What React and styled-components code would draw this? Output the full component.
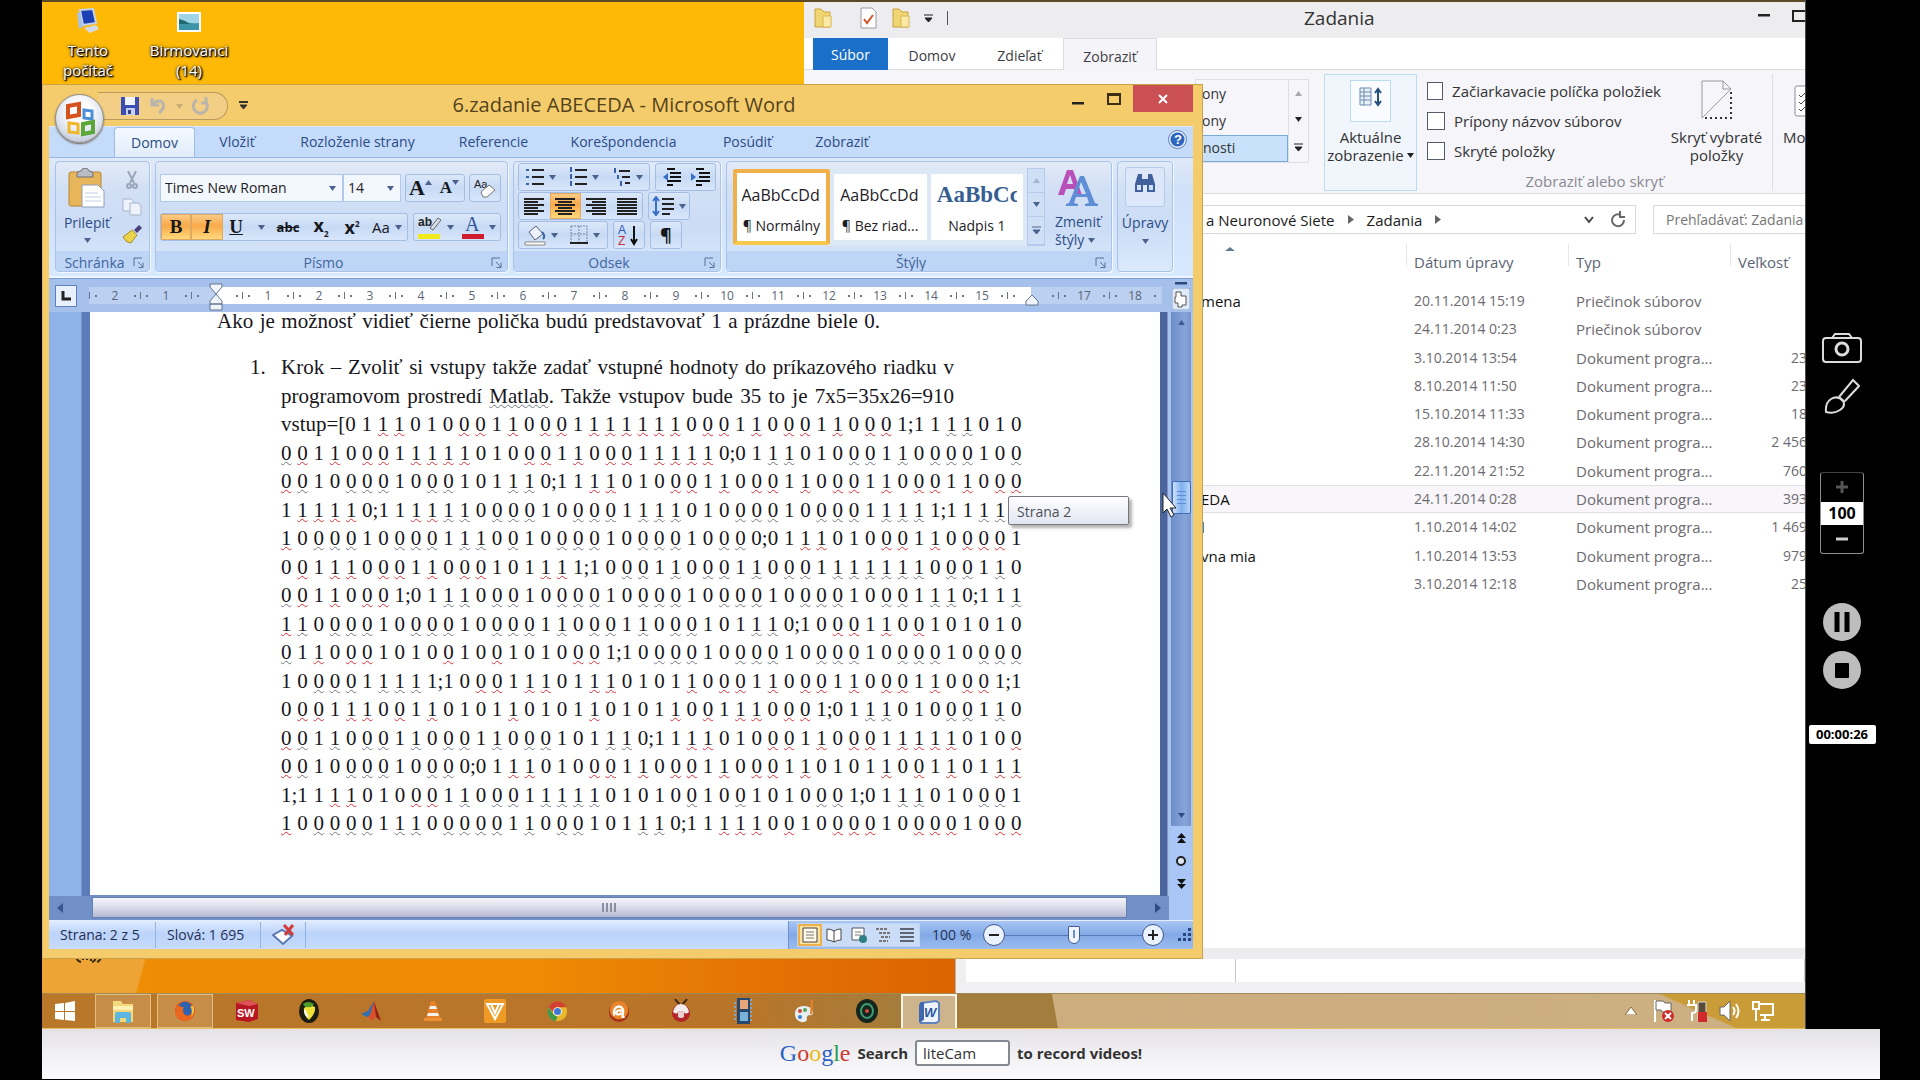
import React from "react";
import styled, { createGlobalStyle, css } from "styled-components";

const ui = `"Open Sans", "Noto Sans", "Liberation Sans", sans-serif`;
const serif = `"Liberation Serif", "Times New Roman", serif`;

const GlobalStyle = createGlobalStyle`
  *, *::before, *::after { box-sizing: border-box; }
  body { margin: 0; background: #000; }
  button, input, select { font: inherit; color: inherit; margin: 0; padding: 0; border: 0; background: none; border-radius: 0; outline: 0; }
  p, h1, ol { margin: 0; padding: 0; font-weight: 400; }
  svg { display: block; flex: none; }
`;

/* ---------- page frame ---------- */
const Page = styled.div`
  min-height: 100vh;
  padding: 0 40px 1px 42px;
  display: flex;
  flex-direction: column;
  background: #000;
  font: 14px/18px ${ui};
  color: #1b1b1b;
`;
const Stage = styled.div`
  flex: 1;
  display: flex;
`;
const Screen = styled.div`
  flex: 1;
  min-width: 0;
  display: flex;
  flex-direction: column;
`;
const Desktop = styled.main`
  flex: 1;
  position: relative;
  overflow: hidden;
  border-top: 2px solid #5b4a25;
  background:
    linear-gradient(105deg, #eda434 0 106px, transparent 107px) 0 100% / 100% 60px no-repeat,
    linear-gradient(to right, #ef8d05 0, #ee8a04 500px, #e57405 700px, #dd6400 900px) 0 100% / 100% 60px no-repeat,
    #fdb906;
`;

/* ---------- desktop shortcuts ---------- */
const Shortcuts = styled.div`
  display: flex;
  padding-top: 5px;
`;
const Shortcut = styled.button`
  width: 110px;
  display: flex;
  flex-direction: column;
  align-items: center;
  gap: 5px;
  color: #fff;
  font-size: 15px;
  line-height: 20px;
  text-shadow: 1px 1px 2px #000, 0 0 3px #000, 1px 1px 1px #000;
  &:first-child { width: 92px; }
`;
const HiddenCaption = styled.svg`
  position: absolute;
  left: 33px;
  bottom: 28px;
`;

/* ---------- shared window parts ---------- */
const Window = styled.section`
  position: absolute;
  display: flex;
  flex-direction: column;
`;
const Row = styled.div`
  display: flex;
  align-items: ${(p) => p.$align || "center"};
  gap: ${(p) => p.$gap || 0}px;
`;
const IconButton = styled.button`
  width: ${(p) => p.$w || 24}px;
  height: ${(p) => p.$h || 24}px;
  display: flex;
  align-items: center;
  justify-content: center;
  gap: 3px;
`;

/* ---------- explorer ---------- */
const BackWindow = styled(Window)`
  left: 913px;
  right: 0;
  bottom: 0;
  height: 44px;
  background: #f0eff1;
  padding: 10px 0 11px 10px;
  border-left: 1px solid #b9b4ae;
  flex-direction: row;
`;
const BackPane = styled.div`
  background: #fff;
  border-right: 1px solid #c9c9c9;
  width: ${(p) => p.$w};
`;
const Explorer = styled(Window)`
  left: 762px;
  right: 0;
  top: 0;
  bottom: 34px;
  background: #fff;
  border-bottom: 11px solid #ecebed;
  overflow: hidden;
  font-size: 15px;
`;
const ExTitle = styled.header`
  height: 36px;
  padding-bottom: 4px;
  background: #ededef;
  display: grid;
  grid-template-columns: 200px 1fr 130px;
  align-items: center;
`;
const ExHeading = styled.h1`
  font-size: 19px;
  line-height: 26px;
  color: #333;
  padding-left: 300px;
`;
const ExQuick = styled(Row)`
  padding-left: 10px;
`;
const ExControls = styled(Row)`
  justify-content: flex-end;
  padding-bottom: 5px;
  gap: 22px;
`;
const ExTabs = styled.nav`
  height: 32px;
  padding-left: 9px;
  display: flex;
  border-bottom: 1px solid #dcdcde;
  font-size: 14px;
`;
const ExTab = styled.button`
  width: ${(p) => p.$w}px;
  height: 32px;
  padding-top: 4px;
  color: #3c3c44;
  ${(p) => p.$file && css`background: #1a6fc8; color: #fff; padding-top: 2px;`}
  ${(p) => p.$active && css`background: #f5f5f9; border: 1px solid #dcdcde; border-bottom: 0;`}
`;
const ExRibbon = styled.div`
  height: 124px;
  padding: 4px 0 2px 391px;
  background: #f5f5fa;
  border-bottom: 1px solid #dcdce0;
  display: flex;
  align-items: flex-start;
  color: #333;
  & > * { flex-shrink: 0; }
`;
const LayoutList = styled.div`
  width: 114px;
  height: 84px;
  margin-top: 5px;
  display: flex;
  border: 1px solid #dfe0e6;
  font-size: 14px;
`;
const LayoutNames = styled.div`
  flex: 1;
  display: grid;
  grid-template-rows: 1fr 1fr 1fr;
`;
const LayoutName = styled.button`
  text-align: left;
  padding-left: 6px;
  ${(p) => p.$on && css`background: #c9e1fa; border: 1px solid #7aa9d8;`}
`;
const LayoutArrows = styled.div`
  width: 20px;
  border-left: 1px solid #dfe0e6;
  display: grid;
  align-items: center;
  justify-items: center;
`;
const CurrentView = styled.button`
  width: 93px;
  height: 117px;
  margin-left: 15px;
  padding-top: 5px;
  border: 1px solid #b9ddf0;
  background: #f0f6fc;
  display: flex;
  flex-direction: column;
  align-items: center;
`;
const ViewIcon = styled.span`
  width: 41px;
  height: 42px;
  margin-bottom: 6px;
  border: 1px solid #b9ddf0;
  background: #f9fbfe;
  display: flex;
  justify-content: center;
  padding-top: 6px;
`;
const ShowHide = styled.div`
  width: 356px;
  height: 117px;
  padding-left: 10px;
  border-right: 1px solid #dfe0e6;
  display: grid;
  grid-template-columns: 234px 1fr;
  grid-template-rows: 98px 18px;
`;
const Checks = styled.div`
  padding-top: 2px;
  display: flex;
  flex-direction: column;
`;
const Check = styled.label`
  height: 30px;
  display: flex;
  align-items: center;
  gap: 9px;
  white-space: nowrap;
`;
const Box = styled.input`
  appearance: none;
  width: 18px;
  height: 18px;
  border: 1px solid #555b68;
  background: #fff;
`;
const TallButton = styled.button`
  padding: 6px 0 0;
  display: flex;
  flex-direction: column;
  align-items: center;
  gap: 8px;
`;
const SectionName = styled.div`
  grid-column: 1 / -1;
  text-align: center;
  padding-right: 10px;
  color: #8a8a92;
`;
const Options = styled(TallButton)`
  align-items: flex-start;
  padding: 11px 0 0 10px;
  gap: 11px;
  svg { margin-left: 11px; }
`;
const AddressRow = styled.div`
  padding: 11px 0 0;
  display: flex;
  gap: 17px;
`;
const Address = styled.div`
  width: 832px;
  height: 29px;
  padding-left: 401px;
  border: 1px solid #d9d9d9;
  display: flex;
  align-items: center;
  white-space: nowrap;
  gap: 13px;
`;
const AddressEnd = styled(Row)`
  margin-left: auto;
`;
const Search = styled.input`
  flex: 1;
  min-width: 0;
  height: 29px;
  border: 1px solid #d9d9d9;
  border-right: 0;
  padding-left: 12px;
  font-size: 14px;
  &::placeholder { color: #777; opacity: 1; }
`;
const Files = styled.table`
  width: 1003px;
  height: 354px;
  margin-top: 10px;
  border-collapse: collapse;
  table-layout: fixed;
  color: #6d6a70;
  white-space: nowrap;
  col:nth-child(1) { width: 602px; }
  col:nth-child(2), col:nth-child(3) { width: 162px; }
  th { height: 43px; font-weight: 400; text-align: left; padding: 0 0 8px 8px; color: #5b6475; background: linear-gradient(#e6e6ea, #e6e6ea) 0 0 / 1px 22px no-repeat; }
  th:first-child { background: none; padding: 0 0 34px 421px; }
  td { padding: 0 0 0 8px; }
  td:first-child { padding-left: 397px; color: #111; }
  td:nth-child(2), td:last-child { font-size: 14px; }
  td:last-child { text-align: right; }
`;
const FileRow = styled.tr`
  ${(p) => p.$on && css`background: #f8f6fa; outline: 1px solid #e2dfe4; outline-offset: -1px;`}
`;

/* ---------- word window ---------- */
const Word = styled(Window)`
  left: 0;
  top: 82px;
  bottom: 34px;
  width: 1161px;
  background: #f4cc6c;
  border: 1px solid #c9a24c;
  border-left-color: #e0b558;
  padding: 0 9px 9px 6px;
`;
const WordTitle = styled.header`
  height: 41px;
  display: grid;
  grid-template-columns: 260px 1fr 140px;
`;
const WordHeading = styled.h1`
  font-size: 20px;
  line-height: 40px;
  color: #54431c;
  text-align: center;
  padding-right: 114px;
  white-space: nowrap;
`;
const Office = styled.button`
  position: absolute;
  left: 12px;
  top: 9px;
  width: 49px;
  height: 49px;
  border-radius: 50%;
  border: 1px solid #8f8a80;
  background: radial-gradient(circle at 50% 35%, #fff 0 25%, #dde3ee 60%, #aab4c8 100%);
  box-shadow: 0 1px 2px #6b6250;
  display: flex;
  align-items: center;
  justify-content: center;
  z-index: 2;
`;
const QuickBar = styled(Row)`
  height: 28px;
  width: 130px;
  margin: 7px 0 0 49px;
  padding-left: 22px;
  border: 1px solid #b99a5c;
  border-left: 0;
  border-radius: 0 14px 14px 0;
  background: #f2cf84;
`;
const QuickRow = styled(Row)`
  gap: 6px;
`;
const Controls = styled.div`
  display: flex;
  justify-content: flex-end;
  align-items: flex-start;
`;
const Close = styled.button`
  width: 60px;
  height: 27px;
  background: #cb5053;
  color: #fff;
  display: flex;
  align-items: center;
  justify-content: center;
`;
const Tabs = styled.nav`
  height: 31px;
  padding-left: 65px;
  display: flex;
  align-items: flex-end;
  background: #c5dbfa;
  border-top: 1px solid #dbe8fb;
  color: #2b4c86;
`;
const Tab = styled.button`
  width: ${(p) => p.$w}px;
  height: 30px;
  ${(p) => p.$on && css`
    border: 1px solid #9dbce6;
    border-bottom: 0;
    border-radius: 4px 4px 0 0;
    background: linear-gradient(#f4f9ff, #e2ecfa);
  `}
`;
const Help = styled.button`
  margin: 0 6px 8px auto;
`;
const Ribbon = styled.div`
  height: 121px;
  padding: 3px 20px 4px 6px;
  display: flex;
  gap: 5px;
  background: linear-gradient(#dfe9f8, #cfe0f8 30%, #d7e9ff);
  border-top: 1px solid #98b8e4;
  border-bottom: 2px solid #eef5ff;
`;
const Group = styled.section`
  width: ${(p) => p.$w}px;
  border: 1px solid #a9c3e8;
  border-radius: 4px;
  box-shadow: 1px 1px 0 #f2f8ff;
  display: flex;
  flex-direction: column;
  flex-shrink: 0;
  background: linear-gradient(#e2eaf7, #d2e0f5 25%, #cbdcf5 60%, #dbe9fb);
  overflow: hidden;
`;
const GroupBody = styled.div`
  flex: 1;
  min-height: 0;
  display: flex;
  ${(p) => p.$column && css`flex-direction: column;`}
  gap: ${(p) => p.$gap || 0}px;
  padding: ${(p) => p.$pad || "0"};
`;
const GroupName = styled.footer`
  height: 20px;
  display: flex;
  align-items: center;
  justify-content: center;
  background: #bfd5f5;
  color: #3f659f;
  padding: 3px 4px 0 0;
  line-height: 17px;
  & > span { flex: 1; text-align: center; }
`;
const Paste = styled.button`
  width: 66px;
  padding: 6px 2px 0 0;
  display: flex;
  flex-direction: column;
  align-items: center;
  gap: 6px;
  color: #2b4c86;
`;
const SmallTools = styled.div`
  display: grid;
  padding: 4px 5px 4px 0;
  grid-template-rows: 1fr 1fr 1fr;
`;
const Field = styled.label`
  width: ${(p) => p.$w}px;
  height: 28px;
  background: #f3f7fe;
  border: 1px solid #b2c9eb;
  display: flex;
  align-items: center;
  padding: 0 6px 0 4px;
  color: #222;
  select { appearance: none; flex: 1; min-width: 0; }
`;
const Strip = styled.div`
  height: 28px;
  width: ${(p) => p.$w}px;
  display: flex;
  border: 1px solid #a3bde4;
  border-radius: 3px;
  background: linear-gradient(#dce8f9, #c7daf5 50%, #d8e6fa);
`;
const Tool = styled.button`
  flex: ${(p) => p.$flex || 1};
  display: flex;
  align-items: center;
  justify-content: center;
  gap: ${(p) => (p.$raised ? 0 : 5)}px;
  color: #16181d;
  font-family: ${(p) => (p.$serif ? serif : ui)};
  font-size: ${(p) => p.$size || 14}px;
  font-weight: ${(p) => (p.$bold ? 700 : 400)};
  sub, sup { font-size: 8px; line-height: 1; }
  ${(p) => p.$raised && css`svg { margin-bottom: 12px; }`}
  ${(p) => p.$on && css`
    background: linear-gradient(#fbcf8c, #f9a94a 45%, #fddc80);
    box-shadow: inset 0 0 0 1px #e0a860;
  `}
`;
const Gallery = styled.div`
  width: 312px;
  height: 78px;
  margin-top: 6px;
  display: flex;
  align-items: center;
  gap: 4px;
  background: #dde8f7;
`;
const StyleCard = styled.button`
  width: ${(p) => (p.$on ? 98 : 94)}px;
  height: ${(p) => (p.$on ? 76 : 66)}px;
  padding-top: 4px;
  background: #fff;
  overflow: hidden;
  white-space: nowrap;
  display: flex;
  flex-direction: column;
  align-items: center;
  justify-content: center;
  gap: 10px;
  color: #1d1b26;
  ${(p) => p.$on && css`border: 4px solid #f0b04a; border-bottom-color: #f8c94a; border-radius: 3px;`}
`;
const Sample = styled.span`
  width: 80px;
  overflow: hidden;
  text-align: left;
  font-size: 16px;
  line-height: 24px;
  ${(p) => p.$heading && css`font: 700 23px/24px ${serif}; color: #365f91;`}
`;
const GalleryArrows = styled.div`
  width: 18px;
  height: 78px;
  display: grid;
  border: 1px solid #b6cbec;
  background: #cfdff6;
  button { display: flex; align-items: center; justify-content: center; border-bottom: 1px solid #b6cbec; }
`;
const BigTool = styled.button`
  flex: 1;
  display: flex;
  flex-direction: column;
  align-items: center;
  justify-content: flex-start;
  gap: ${(p) => p.$gap || 4}px;
  padding-top: 5px;
  color: #2b4c86;
`;
const Tile = styled.span`
  width: 40px;
  height: 40px;
  border: 1px solid #b4caea;
  border-radius: 3px;
  background: #dce8f9;
  display: flex;
  align-items: flex-start;
  justify-content: center;
  padding-top: 5px;
`;
const RulerBar = styled.div`
  height: 34px;
  display: flex;
  align-items: center;
  background: #a5c0ea;
  border-top: 1px solid #7d9fd4;
  padding-left: 6px;
`;
const TabStop = styled.button`
  width: 22px;
  height: 22px;
  margin-right: 12px;
  border: 1px solid #5f80b8;
  background: #e8f0fb;
  display: flex;
  align-items: center;
  justify-content: center;
`;
const Ruler = styled.div`
  position: relative;
  width: 1073px;
  height: 17px;
  display: flex;
  background: linear-gradient(to right, #bcd1f2 127px, #fff 127px 942px, #bcd1f2 942px);
  font-size: 12px;
  line-height: 17px;
  color: #5a6576;
`;
const Mark = styled.span`
  width: 51px;
  display: grid;
  grid-template-columns: 11px 1fr 11px;
  align-items: center;
  justify-items: center;
  text-align: center;
  border-left: 1px solid transparent;
  border-image: linear-gradient(transparent 30%, #68758a 30% 70%, transparent 70%) 1;
  &::before, &::after { content: ""; width: 2px; height: 2px; background: #68758a; }
`;
const Marker = styled.svg`
  position: absolute;
  top: ${(p) => p.$top}px;
  left: ${(p) => p.$left}px;
`;
const RulerEnd = styled.div`
  margin-left: 10px;
  display: grid;
  gap: 3px;
`;
const Viewport = styled.div`
  flex: 1;
  min-height: 0;
  display: flex;
  position: relative;
`;
const Gutter = styled.div`
  width: 41px;
  background: linear-gradient(to right, #8fb3e8 0 32px, #5b7cb8 33px);
`;
const Paper = styled.article`
  flex: 1;
  min-width: 0;
  overflow: hidden;
  padding-left: 127px;
  background: #fff;
  border-bottom: 1px solid #6f8fc4;
  font: 21px/28px ${serif};
  color: #17161c;
`;
const Lead = styled.p`
  width: 663px;
  line-height: 18px;
  text-align-last: justify;
`;
const Step = styled.div`
  margin-top: 23px;
  padding-left: 33px;
  display: grid;
  grid-template-columns: 31px 740px;
`;
const StepText = styled.div`
  min-height: 484px;
  display: grid;
  align-content: space-between;
  white-space: nowrap;
`;
const Prose = styled.p`
  width: 673px;
  text-align-last: justify;
`;
const Bits = styled.p`
  text-align-last: justify;
`;
const Wave = styled.span`
  text-decoration: underline wavy ${(p) => (p.$red ? "#dc3038" : "#74757c")} 1px;
  text-decoration-skip-ink: none;
  text-underline-offset: 1px;
`;
const PaperEdge = styled.div`
  width: 11px;
  background: linear-gradient(to right, #4b669c 0 7px, #a9c4ee 8px);
`;
const ScrollColumn = styled.div`
  width: 22px;
  padding: 0 2px 0 0;
  display: flex;
  flex-direction: column;
  background: #a9c6f6;
`;
const Track = styled.div`
  flex: 1;
  padding: 8px 0;
  display: flex;
  flex-direction: column;
  align-items: center;
  background: linear-gradient(to right, #6d8ec8, #86a5d8 70%, #7795cb);
`;
const Thumb = styled.div`
  width: 19px;
  height: 33px;
  margin: 156px 0 auto;
  border: 1px solid #3e6bb8;
  border-radius: 2px;
  background: repeating-linear-gradient(#5f8cd0 0 1px, transparent 1px 4px) 50% 50% / 9px 13px no-repeat, linear-gradient(to right, #cfe2fc, #7fb0ee 50%, #b8d5fa);
`;
const Browse = styled.div`
  height: 70px;
  display: grid;
  justify-items: center;
  align-items: center;
`;
const PageTip = styled.div`
  position: absolute;
  left: 959px;
  top: 184px;
  width: 121px;
  height: 29px;
  padding-left: 8px;
  border: 1px solid #77787e;
  border-radius: 2px;
  background: linear-gradient(#fff, #e2e5f2);
  box-shadow: 3px 3px 3px rgba(0, 0, 0, 0.3);
  line-height: 30px;
  color: #4b5058;
`;
const Cursor = styled.svg`
  position: absolute;
  left: 1113px;
  top: 180px;
`;
const ScrollRow = styled.div`
  height: 24px;
  display: flex;
  padding: 1px 24px 2px 0;
  background: linear-gradient(to right, #7190c8 calc(100% - 24px), #a9c6f6 0);
`;
const ScrollEnd = styled.button`
  width: ${(p) => p.$w}px;
  padding: 0 8px;
  display: flex;
  align-items: center;
  justify-content: ${(p) => (p.$right ? "flex-end" : "flex-start")};
`;
const HThumb = styled.div`
  flex: 1;
  border: 1px solid #6a80ac;
  background: repeating-linear-gradient(to right, #8a8ea0 0 2px, transparent 2px 4px) 50% 50% / 16px 9px no-repeat, linear-gradient(#f6f6fb, #d9dbea 50%, #b5b9d2);
`;
const Status = styled.footer`
  height: 29px;
  display: flex;
  align-items: center;
  border-top: 1px solid #e5eefc;
  background: linear-gradient(#dfebfe, #bcd3fa 45%, #c6dbfc);
  color: #1f2f55;
`;
const StatusCell = styled.div`
  width: ${(p) => p.$w}px;
  height: 26px;
  padding-left: 11px;
  display: flex;
  align-items: center;
  white-space: nowrap;
  border-right: 1px solid #95b3e2;
`;
const StatusTools = styled.div`
  margin-left: auto;
  width: 405px;
  height: 28px;
  padding-left: 8px;
  display: flex;
  align-items: center;
  white-space: nowrap;
  border-left: 1px solid #6d91cc;
  background: linear-gradient(#a9c6f4, #82a9e6 50%, #9dbdf0);
`;
const Views = styled(Row)`
  width: 123px;
  height: 24px;
  flex: none;
  margin-right: 12px;
  border: 1px solid #c0d5f5;
  background: #cbdcf6;
`;
const ViewButton = styled.button`
  flex: 1;
  height: 22px;
  display: flex;
  align-items: center;
  justify-content: center;
  ${(p) => p.$on && css`background: #fbe2a2; box-shadow: inset 0 0 0 2px #eeb04a;`}
`;
const RoundButton = styled.button`
  width: 22px;
  height: 22px;
  border-radius: 50%;
  border: 1px solid #41568a;
  background: #eaf2ff;
  display: flex;
  align-items: center;
  justify-content: center;
`;
const Zoom = styled.input`
  appearance: none;
  width: 137px;
  height: 20px;
  background: linear-gradient(#5a7ab5, #5a7ab5) 0 50% / 100% 1px no-repeat;
  &::-webkit-slider-thumb {
    appearance: none;
    width: 12px;
    height: 18px;
    background: linear-gradient(#6c90cc, #6c90cc) 50% 40% / 2px 8px no-repeat, #f0f5ff;
    border: 1px solid #44598c;
    border-radius: 1px 1px 6px 6px;
  }
`;

/* ---------- taskbar ---------- */
const Taskbar = styled.nav`
  height: 36px;
  display: flex;
  border-top: 1px solid #a08a55;
  border-bottom: 1px solid #e8c060;
  background:
    linear-gradient(24deg, transparent 36px, #c99c37 38px) 100% 0 / 160px 34px no-repeat,
    linear-gradient(80deg, #b9772a 0, #b8752a 700px, #a37d3d 860px, #a37d3d 1000px, transparent 1001px),
    linear-gradient(to right, #c8a977, #cdb083);
`;
const Start = styled(IconButton)`
  width: 46px;
  height: 34px;
  margin-right: 7px;
`;
const Task = styled.button`
  width: 56px;
  height: 34px;
  margin-right: 6px;
  display: flex;
  align-items: center;
  justify-content: center;
  ${(p) => p.$open && css`background: rgba(255, 235, 200, 0.2); border: 1px solid #e0bd80;`}
  ${(p) => p.$front && css`background: rgba(250, 236, 222, 0.5); border: 2px solid #fdf4e4; border-bottom: 0;`}
`;
const Tray = styled(Row)`
  margin-left: auto;
  padding-right: 30px;
  gap: 9px;
`;

/* ---------- recorder rail ---------- */
const Rail = styled.aside`
  width: 75px;
  padding: 332px 2px 0 0;
  display: flex;
  flex-direction: column;
  align-items: center;
  border-left: 1px solid #4a4a4a;
`;
const RailTools = styled.div`
  height: 82px;
  margin-bottom: 58px;
  display: flex;
  flex-direction: column;
  justify-content: space-between;
`;
const Stepper = styled.div`
  width: 44px;
  height: 82px;
  margin-bottom: 49px;
  border: 1px solid #8e8e8e;
  border-top-color: #444;
  border-radius: 3px;
  display: grid;
  grid-template-rows: 1fr 23px 1fr;
  button { display: flex; align-items: center; justify-content: center; }
`;
const Level = styled.output`
  background: #fff;
  color: #000;
  text-align: center;
  font: 700 16px/22px ${ui};
`;
const Disc = styled.button`
  width: 38px;
  height: 38px;
  margin-bottom: ${(p) => p.$after}px;
  border-radius: 50%;
  background: #bdbdbd;
  display: flex;
  align-items: center;
  justify-content: center;
`;
const Timer = styled.time`
  width: 67px;
  height: 19px;
  border-radius: 2px;
  background: #fff;
  color: #000;
  font: 700 13px/19px ${ui};
  text-align: center;
`;

/* ---------- promo footer ---------- */
const Promo = styled.form`
  height: 50px;
  padding-bottom: 2px;
  display: flex;
  align-items: center;
  justify-content: center;
  gap: 7px;
  background: linear-gradient(#e4e2e6, #f1f0f3 50%, #fbfafc);
  font-size: 15px;
  font-weight: 700;
  color: #333;
  input { font-size: 15px; }
`;
const Logo = styled.span`
  font: 24px/30px ${serif};
  span:nth-child(1), span:nth-child(4) { color: #2a62c4; }
  span:nth-child(2), span:nth-child(6) { color: #cf3b33; }
  span:nth-child(3) { color: #e9b913; }
  span:nth-child(5) { color: #2e9b4c; }
`;
const PromoInput = styled.input`
  width: 95px;
  height: 26px;
  padding-left: 6px;
  border: 2px solid #84888f;
  border-radius: 3px;
  background: #fff;
  font-weight: 400;
`;

/* ---------- drawings ---------- */
const Caret = ({ c = "#4b628f", up }) => (
  <svg width="7" height="5" viewBox="0 0 7 5"><path d={up ? "M0 5L3.5 0L7 5z" : "M0 0H7L3.5 5z"} fill={c} /></svg>
);
const Launcher = () => (
  <svg width="12" height="12" viewBox="0 0 12 12" fill="none" stroke="#587099"><path d="M1 9V1H9M5 5l5 5M10 5.500V10.500H5.500" /></svg>
);
const S = ({ w = 24, h = w, box, children, ...r }) => (
  <svg width={w} height={h} viewBox={box || `0 0 ${w} ${h}`} fill="none" {...r}>{children}</svg>
);
const Bars = ({ xs, c = "#222" }) => (
  <S w={20} h={18} stroke={c} strokeWidth="2">
    {xs.map(([a, b], i) => <path key={i} d={`M${a} ${2 + i * 3}H${b}`} />)}
  </S>
);
const ListIcon = ({ kind }) => (
  <S w={18} h={20} stroke="#222" strokeWidth="2">
    <path d={kind === 2 ? "M6 4h11M9 10h8M12 16h5" : "M6 3h12M6 10h12M6 17h12"} />
    <path d={kind === 0 ? "M0 3h3M0 10h3M0 17h3" : kind === 1 ? "M2 0v5M2 7v5M2 14v5" : "M2 1v5M5 8v4M8 14v5"} stroke="#3a62a8" />
  </S>
);
const IndentIcon = ({ flip }) => (
  <S w={20} h={18} stroke="#111" strokeWidth="2">
    <path d="M6 1h8M9 5h11M9 9h11M6 13h14M6 17h6" />
    <path d={flip ? "M1 5l5 4l-5 4z" : "M7 5l-5 4l5 4z"} fill="#3a6fc8" stroke="none" />
  </S>
);
const OfficeLogo = () => (
  <S w={34} h={38} strokeWidth="4">
    <path d="M5 6l11-2v11l-11 2z" stroke="#d6521c" /><path d="M21 10l8 1v8l-8-1z" stroke="#4c8fd8" strokeWidth="3" />
    <path d="M6 23l9 1v9l-9-1z" stroke="#efb62a" strokeWidth="3" /><path d="M20 24l10-2v10l-10 2z" stroke="#5ca63a" />
  </S>
);
const Folder = ({ w = 18, h = 20 }) => (
  <S w={w} h={h} box="0 0 18 20"><path d="M1 1h6l3 3h6v15H1z" fill="#f2d573" stroke="#c9a23c" /><path d="M9 8h8v11H9z" fill="#fbeaa6" stroke="#d8b650" /></S>
);

const taskIcons = [
  ["Prieskumník", <S w={24} h={26} key="f"><path d="M2 3h8l2 3h10v18H2z" fill="#f3d77b" /><path d="M2 8h20v4H2z" fill="#fff1b4" /><path d="M4 25v-9q0-2 2-2h12q2 0 2 2v9h-5v-5H9v5z" fill="#5bb7e2" /></S>, "open"],
  ["Firefox", <S w={22} key="ff" box="0 0 24 24"><circle cx="12" cy="12" r="11" fill="#d9581b" /><circle cx="12" cy="10" r="8" fill="#2f63b0" /><path d="M3 5q5 3 8 3q-3 4 1 8q5 3 10-2q-1 9-10 9Q2 22 1 12z" fill="#e8661e" /><path d="M21 6q3 8-3 13q3-6 0-12z" fill="#f6c13a" /></S>, "open"],
  ["SolidWorks", <S w={24} key="sw"><path d="M1 4L14 1l9 4v15l-9 3L1 21z" fill="#b81722" /><path d="M1 4l13 3l9-2L14 1z" fill="#df5158" /><text x="2" y="18" fontSize="11" fontWeight="700" fill="#fff" fontFamily="Liberation Sans, sans-serif">SW</text></S>],
  ["FL Studio", <S w={22} h={26} key="fl"><ellipse cx="11" cy="13" rx="10" ry="12" fill="#1b1d12" /><path d="M6 10q5-4 11-1q1 6-6 13q-6-5-5-12z" fill="#efe03a" /><path d="M5 6q5-4 11 0q-2 4-5 3q-4 1-6-3z" fill="#4f9b2a" /><path d="M7 12q0 4 3 7" stroke="#fff" strokeWidth="2" /></S>],
  ["Matlab", <S w={24} key="m"><path d="M2 15l7-3l6-10l3 9l4 11l-5-4l-5 4l-3-5z" fill="#d9512a" /><path d="M2 15l7-3l6-10l-4 14l-3 2z" fill="#2f6fb4" /><path d="M15 2l3 9l4 11l-5-4z" fill="#8f2318" /></S>],
  ["VLC", <S w={22} h={24} key="v"><path d="M9 2h4l5 17H4z" fill="#e8822a" /><path d="M8 7h6l1 3H7zM6 14h10l1 3H5z" fill="#f4f0ea" /><path d="M2 19h18v3H2z" fill="#ee8f32" /></S>],
  ["V editor", <S w={22} h={24} key="vv"><rect width="22" height="24" rx="2" fill="#ef9a24" /><path d="M3 5h16l-8 15z" stroke="#fff" strokeWidth="2" /><path d="M7 5l4 9l4-9" stroke="#fff" strokeWidth="2" /></S>],
  ["Chrome", <S w={21} key="c" box="0 0 24 24"><circle cx="12" cy="12" r="11" fill="#e8b82c" /><path d="M2 7a11 11 0 0 1 20 0H12a5 5 0 0 0-4 7z" fill="#d43f33" /><path d="M2 7l6 9l4 2l-2 5A11 11 0 0 1 2 7z" fill="#3f9b4b" /><circle cx="12" cy="12" r="5" fill="#fff" /><circle cx="12" cy="12" r="4" fill="#3e78d0" /></S>],
  ["Avast", <S w={22} key="a" box="0 0 24 24"><circle cx="12" cy="13" r="11" fill="#a8301a" /><circle cx="12" cy="11" r="10" fill="#e9842a" /><path d="M7 17q-2-9 5-10q6 1 4 9q-1 4 2 2M15 12q-5-2-6 2q1 4 6 0" stroke="#fff" strokeWidth="2.500" /></S>],
  ["Hmyz", <S w={20} h={24} key="h"><path d="M4 0l5 6M16 0l-5 6" stroke="#42291a" strokeWidth="2" /><circle cx="10" cy="14" r="9" fill="#b3262c" /><path d="M2 13q2-8 8-8t8 8q-4 3-5 0q-3-2-6 0q-1 3-5 0z" fill="#f3eaea" /><path d="M7 13q3-2 6 0v5q-3 2-6 0z" fill="#e6d0d0" /></S>],
  ["Video", <S w={20} h={26} key="vi"><rect x="4" width="13" height="26" fill="#26476e" /><rect x="7" y="2" width="8" height="9" fill="#e8a77a" /><rect x="7" y="14" width="8" height="9" fill="#7ab3d9" /><path d="M2 4v18M18 1v24" stroke="#85a9c4" strokeWidth="2" strokeDasharray="2 2" /></S>],
  ["Skicár", <S w={22} h={24} key="sk"><path d="M1 15q0-8 9-8q8 0 9 7q-1 3-4 2q-3 1-2 5q-2 3-6 2q-6-2-6-8z" fill="#e6eef2" /><circle cx="6" cy="12" r="2" fill="#d2453d" /><circle cx="11" cy="11" r="2" fill="#52a452" /><circle cx="6" cy="18" r="2" fill="#3d7cc9" /><path d="M18 1l-1 14" stroke="#e7812c" strokeWidth="2" /></S>],
  ["Kamera", <S w={22} h={26} key="k"><ellipse cx="11" cy="13" rx="11" ry="12" fill="#13251d" /><ellipse cx="11" cy="13" rx="6" ry="7" stroke="#3f9b72" strokeWidth="2" /><circle cx="11" cy="13" r="2" fill="#d34a38" /></S>],
  ["Microsoft Word", <S w={22} h={24} key="w"><path d="M3 3l15-2l3 2v18l-3 2H3z" fill="#eef3fb" stroke="#5f83be" strokeWidth="2" /><path d="M1 6q0-4 5-4v18q-4 1-5 3z" fill="#3e68b0" /><text x="6" y="17" fontSize="13" fontWeight="700" fontStyle="italic" fill="#2b57a4" fontFamily="Liberation Sans, sans-serif">W</text></S>, "front"],
];

const bitRows = [
  "r vstup=[0 1 1 1 0 1 0 0 0 1 1 0 0 0 1 1 1 1 1 1 1 0 0 0 1 1 0 0 0 1 1 0 0 0 1;1 g 1 1 1 0 1 0",
  "g 0 r 0 1 1 0 0 0 1 1 1 1 1 0 1 0 0 0 1 1 0 0 0 1 1 1 1 1 0;0 g 1 1 1 0 1 0 0 0 1 1 0 0 0 0 1 0 0",
  "r 0 g 0 1 0 0 0 0 1 0 0 0 1 0 1 1 1 0;1 r 1 1 1 0 1 0 0 0 1 1 0 0 0 1 1 0 0 0 1 1 0 0 0 1 1 0 0 0",
  "r 1 1 1 1 1 0;1 1 1 1 g 1 1 0 0 0 0 1 0 0 0 0 1 1 1 1 0 1 0 0 0 0 1 0 0 0 0 1 1 1 1 1;1 1 1 1 1",
  "r 1 g 0 0 0 0 1 0 0 0 0 1 1 1 0 0 1 0 0 0 0 1 0 0 0 0 1 0 0 0 0;0 r 1 1 1 0 1 0 0 0 1 1 0 0 0 0 1",
  "r 0 0 1 1 1 0 0 0 1 1 0 0 0 1 0 1 1 1 1;1 g 0 0 0 1 1 0 0 0 1 1 0 0 0 1 1 1 1 1 1 1 0 0 0 1 1 0",
  "g 0 r 0 1 1 0 0 0 1;0 1 g 1 1 0 0 0 1 0 0 0 0 1 0 0 0 0 1 0 0 0 0 1 0 0 0 0 1 0 0 0 1 1 1 0;1 1 1",
  "r 1 g 1 0 0 0 0 1 0 0 0 0 1 0 0 0 0 1 1 0 0 0 1 1 0 0 0 1 0 1 1 1 0;1 r 0 0 0 1 1 0 0 1 0 1 0 1 0",
  "g 0 r 1 1 0 0 0 1 0 1 0 0 1 0 0 1 0 1 0 0 0 1;1 g 0 0 0 0 1 0 0 0 0 1 0 0 0 0 1 0 0 0 0 1 0 0 0 0",
  "g 1 0 0 0 0 1 1 1 1 1;1 r 0 0 0 1 1 1 0 1 1 1 0 1 0 1 1 0 0 0 1 1 0 0 0 1 1 0 0 0 1 1 0 0 0 1;1",
  "r 0 0 0 1 1 1 0 0 1 1 0 1 0 1 1 0 1 0 1 1 0 1 0 1 1 0 0 1 1 1 0 0 0 1;0 g 1 1 1 0 1 0 0 0 1 1 0",
  "r 0 g 0 1 1 0 0 0 1 1 0 0 0 1 1 0 0 0 1 0 1 1 1 0;1 r 1 1 1 0 1 0 0 0 1 1 0 0 0 1 1 1 1 1 0 1 0 0",
  "r 0 g 0 1 0 0 0 0 1 0 0 0 0;0 r 1 1 1 0 1 0 0 0 1 1 0 0 0 1 1 0 0 0 1 1 0 1 0 1 1 0 0 1 1 0 1 1 1",
  "r 1;1 1 1 1 0 1 0 0 0 g 1 1 0 0 0 1 1 1 1 1 0 1 0 1 0 0 1 0 0 1 0 1 0 0 0 1;0 1 1 1 0 1 0 0 0 1",
  "r 1 g 0 0 0 0 0 1 1 1 0 0 0 0 0 1 1 0 0 0 1 0 1 1 1 0;1 r 1 1 1 1 0 0 1 0 0 0 0 1 0 0 0 0 1 0 0 0",
];

/* A digit equal to the word before it carries the proofing wave. */
function markRepeats(rows) {
  let prev = "";
  return rows.map((row) => {
    let red = true;
    const out = [];
    row.split(" ").forEach((t) => {
      if (t === "r" || t === "g") { red = t === "r"; return; }
      out.push({ t, red, wave: t === prev });
      prev = t;
    });
    return out;
  });
}
const bits = markRepeats(bitRows);

const files = [
  ["mena", "20.11.2014 15:19", "Priečinok súborov", ""],
  ["", "24.11.2014 0:23", "Priečinok súborov", ""],
  ["", "3.10.2014 13:54", "Dokument progra...", "23"],
  ["", "8.10.2014 11:50", "Dokument progra...", "23"],
  ["", "15.10.2014 11:33", "Dokument progra...", "18"],
  ["", "28.10.2014 14:30", "Dokument progra...", "2 456"],
  ["", "22.11.2014 21:52", "Dokument progra...", "760"],
  ["EDA", "24.11.2014 0:28", "Dokument progra...", "393"],
  ["l", "1.10.2014 14:02", "Dokument progra...", "1 469"],
  ["vna mia", "1.10.2014 13:53", "Dokument progra...", "979"],
  ["", "3.10.2014 12:18", "Dokument progra...", "25"],
];

const wordTabs = [["Domov", 81], ["Vložiť", 84], ["Rozloženie strany", 157], ["Referencie", 115], ["Korešpondencia", 145], ["Posúdiť", 103], ["Zobraziť", 86]];

function ExplorerWindow() {
  return (
    <Explorer>
      <ExTitle>
        <ExQuick $gap={14}>
          <Folder /><span />
          <S w={18} h={22}><path d="M1 1h11l4 4v16H1z" fill="#fff" stroke="#9a9aa2" /><path d="M4 12l3 4l6-8" stroke="#d0532c" strokeWidth="2" /></S>
          <Folder />
          <S w={9} h={9} stroke="#222"><path d="M0 1h9" /><path d="M1 4h7l-3.500 4z" fill="#222" /></S>
          <S w={1} h={14}><path d="M0 0v14" stroke="#555" strokeWidth="2" /></S>
        </ExQuick>
        <ExHeading>Zadania</ExHeading>
        <ExControls>
          <IconButton $w={12} aria-label="Minimalizovať"><S w={12} h={3}><path d="M0 1h12" stroke="#222" strokeWidth="3" /></S></IconButton>
          <IconButton $w={13} aria-label="Maximalizovať"><S w={13} h={12}><path d="M14 1H1v10h13" stroke="#222" strokeWidth="2" /></S></IconButton>
        </ExControls>
      </ExTitle>
      <ExTabs>
        <ExTab $w={75} $file>Súbor</ExTab>
        <ExTab $w={88}>Domov</ExTab>
        <ExTab $w={87}>Zdieľať</ExTab>
        <ExTab $w={94} $active>Zobraziť</ExTab>
      </ExTabs>
      <ExRibbon>
        <LayoutList>
          <LayoutNames>
            <LayoutName>ony</LayoutName>
            <LayoutName>ony</LayoutName>
            <LayoutName $on>nosti</LayoutName>
          </LayoutNames>
          <LayoutArrows><Caret up c="#aaa" /><Caret c="#222" /><S w={9} h={9} stroke="#222"><path d="M0 1h9" /><path d="M1 4h7l-3.500 4z" fill="#222" /></S></LayoutArrows>
        </LayoutList>
        <CurrentView>
          <ViewIcon><S w={24} h={20} stroke="#6d8bb0"><path d="M1 1h11v17H1zM1 5h11M1 9h11M1 13h11M5 1v17" fill="#e8f0f8" /><path d="M19 3v13M16 6l3-4l3 4M16 14l3 4l3-4" stroke="#24507e" strokeWidth="2" /></S></ViewIcon>
          Aktuálne
          <Row $gap={3}>zobrazenie <Caret c="#222" /></Row>
        </CurrentView>
        <ShowHide>
          <Checks>
            <Check><Box type="checkbox" />Začiarkavacie políčka položiek</Check>
            <Check><Box type="checkbox" />Prípony názvov súborov</Check>
            <Check><Box type="checkbox" />Skryté položky</Check>
          </Checks>
          <TallButton>
            <S w={32} h={40} stroke="#9a9aa2"><path d="M1 38V1h21l8 8M22 1v8h8M1 38L30 9" /><path d="M30 12v26H4" stroke="#333" strokeWidth="2" strokeDasharray="2 3" /></S>
            <span>Skryť vybraté<br />položky</span>
          </TallButton>
          <SectionName>Zobraziť alebo skryť</SectionName>
        </ShowHide>
        <Options>
          <S w={24} h={32}><rect x="1" y="1" width="26" height="30" rx="2" stroke="#8a8a92" fill="#fff" /><path d="M5 10l2 2l4-4M5 17l2 2l4-4M5 24l2 2l4-4" stroke="#445" /></S>
          Mo
        </Options>
      </ExRibbon>
      <AddressRow>
        <Address>
          <span>a Neuronové Siete</span>
          <S w={6} h={9}><path d="M0 0l6 4.500l-6 4.500z" fill="#666" /></S>
          <span>Zadania</span>
          <S w={6} h={9}><path d="M0 0l6 4.500l-6 4.500z" fill="#666" /></S>
          <AddressEnd>
            <IconButton aria-label="História"><S w={10} h={8}><path d="M1 1l4 5l4-5" stroke="#444" strokeWidth="2" /></S></IconButton>
            <IconButton $w={34} aria-label="Obnoviť"><S w={16} h={18}><path d="M11 4a6 6 0 1 0 3 5M10 0v6h5" stroke="#666" strokeWidth="2" /></S></IconButton>
          </AddressEnd>
        </Address>
        <Search aria-label="Prehľadávať" placeholder="Prehľadávať: Zadania" />
      </AddressRow>
      <Files>
        <colgroup><col /><col /><col /><col /></colgroup>
        <thead>
          <tr><th aria-label="Názov"><S w={10} h={5}><path d="M0 5l5-4l5 4z" fill="#5f7d90" /></S></th><th>Dátum úpravy</th><th>Typ</th><th>Veľkosť</th></tr>
        </thead>
        <tbody>
          {files.map((f, i) => (
            <FileRow key={i} $on={i === 7}>{f.map((c, j) => <td key={j}>{c}</td>)}</FileRow>
          ))}
        </tbody>
      </Files>
    </Explorer>
  );
}

function WordRibbon() {
  return (
    <Ribbon>
      <Group $w={95}>
        <GroupBody>
          <Paste>
            <S w={38} h={40}><rect x="1" y="4" width="32" height="34" rx="2" fill="#e8b65a" stroke="#b98532" /><path d="M9 6q0-3 4-3q1-3 4-3q3 0 4 3q4 0 4 3v3H9z" fill="#b9bcc4" stroke="#6d6d74" /><path d="M14 17h16l6 6v16H14z" fill="#fff" stroke="#8f9cb8" /><path d="M17 25h13M17 29h16M17 33h16" stroke="#c2cde2" /></S>
            Prilepiť
            <Caret />
          </Paste>
          <SmallTools>
            <IconButton $h={27} aria-label="Vystrihnúť"><S w={14} h={18} stroke="#9aa6bb" strokeWidth="2"><path d="M3 0l6 12M11 0L5 12" /><circle cx="4" cy="15" r="2" /><circle cx="10" cy="15" r="2" /></S></IconButton>
            <IconButton $h={27} aria-label="Kopírovať"><S w={20} h={18} fill="#eef2fa" stroke="#a7b3ca"><path d="M1 1h8l3 3v9H1z" /><path d="M8 5h8l3 3v9H8z" /></S></IconButton>
            <IconButton $h={27} aria-label="Kopírovať formát"><S w={20} h={20}><path d="M12 6l5-5l3 3l-5 5z" fill="#4a3f7a" /><path d="M10 6l5 5l-6 8q-5 0-8-6z" fill="#e9d44c" stroke="#a58c2a" /></S></IconButton>
          </SmallTools>
        </GroupBody>
        <GroupName><span>Schránka</span><Launcher /></GroupName>
      </Group>

      <Group $w={353}>
        <GroupBody $column $gap={11} $pad="12px 4px 0">
          <Row $gap={4}>
            <Row>
              <Field $w={183}><select aria-label="Písmo"><option>Times New Roman</option></select><Caret /></Field>
              <Field $w={58}><select aria-label="Veľkosť písma"><option>14</option></select><Caret /></Field>
            </Row>
            <Strip $w={60}>
              <Tool $serif $bold $raised $size={22}>A<Caret up /></Tool>
              <Tool $serif $bold $raised $size={17}>A<Caret /></Tool>
            </Strip>
            <Strip $w={32}><Tool aria-label="Vymazať formátovanie"><S w={24} h={22}><text x="1" y="11" fontSize="11" fill="#222" fontFamily="Liberation Sans, sans-serif">Aa</text><path d="M8 15l8-7l6 5l-8 7h-4z" fill="#fff" stroke="#777" /></S></Tool></Strip>
          </Row>
          <Row $gap={5}>
            <Strip $w={248}>
              <Tool $flex="0 0 30px" $on $serif $bold $size={19}>B</Tool>
              <Tool $flex="0 0 32px" $on $serif $bold $size={19}><i>I</i></Tool>
              <Tool $flex="0 0 48px" $serif $bold $size={19}><u>U</u>&nbsp;<Caret /></Tool>
              <Tool $flex="0 0 34px" $bold $size={13}><s>abc</s></Tool>
              <Tool $flex="0 0 32px" $bold $size={18}><span>x<sub>2</sub></span></Tool>
              <Tool $flex="0 0 30px" $bold $size={18}><span>x<sup>2</sup></span></Tool>
              <Tool $size={15}>Aa<Caret /></Tool>
            </Strip>
            <Strip $w={88}>
              <Tool aria-label="Zvýraznenie"><S w={24} h={24}><text x="0" y="11" fontSize="12" fontWeight="700" fill="#222" fontFamily="Liberation Sans, sans-serif">ab</text><path d="M12 13l8-10l3 2l-8 10z" fill="#d9dde8" stroke="#666" /><path d="M0 19h22v5H0z" fill="#f2ea1c" /></S><Caret /></Tool>
              <Tool aria-label="Farba písma"><S w={22} h={24}><text x="3" y="16" fontSize="20" fill="#33569a" fontFamily="Liberation Serif, serif">A</text><path d="M0 19h22v5H0z" fill="#cf1b2b" /></S><Caret /></Tool>
            </Strip>
          </Row>
        </GroupBody>
        <GroupName><span>Písmo</span><Launcher /></GroupName>
      </Group>

      <Group $w={208}>
        <GroupBody $column $gap={1} $pad="1px 4px 0">
          <Row $gap={5}>
            <Strip $w={133}>{[0, 1, 2].map((k) => <Tool key={k} aria-label="Zoznam"><ListIcon kind={k} /><Caret /></Tool>)}</Strip>
            <Strip $w={61}><Tool aria-label="Zmenšiť zarážku"><IndentIcon /></Tool><Tool aria-label="Zväčšiť zarážku"><IndentIcon flip /></Tool></Strip>
          </Row>
          <Row $gap={5}>
            <Strip $w={125}>
              <Tool aria-label="Vľavo"><Bars xs={[[0, 20], [0, 14], [0, 20], [0, 14], [0, 20], [0, 14]]} /></Tool>
              <Tool $on aria-label="Centrovať"><Bars xs={[[0, 20], [3, 17], [0, 20], [3, 17], [0, 20], [3, 17]]} /></Tool>
              <Tool aria-label="Vpravo"><Bars xs={[[0, 20], [6, 20], [0, 20], [6, 20], [0, 20], [6, 20]]} /></Tool>
              <Tool aria-label="Podľa okraja"><Bars xs={[[0, 20], [0, 20], [0, 20], [0, 20], [0, 20], [0, 20]]} /></Tool>
            </Strip>
            <Strip $w={42}><Tool aria-label="Riadkovanie"><S w={22} h={20} stroke="#222" strokeWidth="2"><path d="M10 3h12M10 8h12M10 13h12M10 18h8" /><path d="M4 1v18M1 5l3-4l3 4M1 15l3 4l3-4" stroke="#3a6fc8" /></S><Caret /></Tool></Strip>
          </Row>
          <Row $gap={5}>
            <Strip $w={90}>
              <Tool aria-label="Podfarbenie"><S w={22} h={22}><path d="M5 8l7-6l7 8l-8 6z" fill="#eef2fa" stroke="#555f78" /><path d="M18 8q4 4 1 7" stroke="#3a62a8" strokeWidth="2" /><path d="M1 18h20v3H1z" fill="#fff" stroke="#888" /></S><Caret /></Tool>
              <Tool aria-label="Orámovanie"><S w={18} h={20}><path d="M1 1h16v16M1 1v16M9 1v16M1 9h16" stroke="#7886a4" strokeDasharray="2 1" /><path d="M0 18h18" stroke="#222" strokeWidth="2" /></S><Caret /></Tool>
            </Strip>
            <Strip $w={32}><Tool aria-label="Zoradiť"><S w={22} h={22}><text x="0" y="10" fontSize="12" fill="#2b57b4" fontFamily="Liberation Sans, sans-serif">A</text><text x="0" y="21" fontSize="12" fill="#c03040" fontFamily="Liberation Sans, sans-serif">Z</text><path d="M16 2v17M13 15l3 5l3-5" stroke="#111" strokeWidth="2" /></S></Tool></Strip>
            <Strip $w={32}><Tool $bold $size={18}>¶</Tool></Strip>
          </Row>
        </GroupBody>
        <GroupName><span>Odsek</span><Launcher /></GroupName>
      </Group>

      <Group $w={386}>
        <GroupBody $pad="0 0 0 6px">
          <Gallery>
            <StyleCard $on><Sample>AaBbCcDd</Sample><span>¶ Normálny</span></StyleCard>
            <StyleCard><Sample>AaBbCcDd</Sample><span>¶ Bez riad...</span></StyleCard>
            <StyleCard><Sample $heading>AaBbCcD</Sample><span>Nadpis 1</span></StyleCard>
            <GalleryArrows>
              <button aria-label="Nahor"><Caret up c="#a9b4c8" /></button>
              <button aria-label="Nadol"><Caret /></button>
              <button aria-label="Viac"><S w={9} h={9} stroke="#4b628f"><path d="M0 1h9" /><path d="M1 4h7l-3.500 4z" fill="#4b628f" /></S></button>
            </GalleryArrows>
          </Gallery>
          <BigTool $gap={6}>
            <S w={42} h={40}><path d="M1 28L10 3h6l9 25h-6l-2-6H9l-2 6zM10 17h6l-3-9z" fill="#b94fb8" fillRule="evenodd" /><path d="M9 39v-2l3-1L23 9h4l11 27l3 1v2H28v-2l4-1l-2-6H19l-2 6l4 1v2zM20 27h9l-5-12z" fill="#5e8ed6" fillRule="evenodd" /></S>
            <span>Zmeniť<Row $gap={4}>štýly <Caret /></Row></span>
          </BigTool>
        </GroupBody>
        <GroupName><span>Štýly</span><Launcher /></GroupName>
      </Group>

      <Group $w={56}>
        <BigTool $gap={7}>
          <Tile><S w={22} h={20}><path d="M4 1h4v5h6V1h4l3 10v8h-8v-7H9v7H1v-8z" fill="#40619e" /><path d="M3 12h4v5H3zM15 12h4v5h-4z" fill="#cfe0f8" /></S></Tile>
          Úpravy
          <Caret />
        </BigTool>
      </Group>
    </Ribbon>
  );
}

function WordWindow() {
  return (
    <Word>
      <Office aria-label="Office"><OfficeLogo /></Office>
      <WordTitle>
        <QuickRow $align="flex-start">
          <QuickBar $gap={9}>
            <S w={20} h={20}><path d="M1 1h18v18H1z" fill="#3c4fb0" /><path d="M5 1h10v8H5z" fill="#f0f4ff" /><path d="M6 12h9v7H6z" fill="#c5cff0" /><path d="M8 14h3v4H8z" fill="#333d80" /></S>
            <S w={18} h={18}><path d="M3 1v7h7M3 8q5-6 10-3q4 5-3 11" stroke="#b9b4ac" strokeWidth="3" /></S>
            <Caret c="#c9ab75" />
            <S w={18} h={18}><path d="M5 3a7 7 0 1 0 9 2M14 0v6H9" stroke="#b9b4ac" strokeWidth="3" /></S>
          </QuickBar>
          <IconButton $w={18} $h={40} aria-label="Prispôsobiť"><S w={9} h={9} stroke="#333"><path d="M0 1h9" strokeWidth="2" /><path d="M1 4h7l-3.500 4z" fill="#333" /></S></IconButton>
        </QuickRow>
        <WordHeading>6.zadanie ABECEDA - Microsoft Word</WordHeading>
        <Controls>
          <IconButton $w={34} $h={36} aria-label="Minimalizovať"><S w={12} h={3}><path d="M0 1h12" stroke="#222" strokeWidth="3" /></S></IconButton>
          <IconButton $w={38} $h={27} aria-label="Maximalizovať"><S w={14} h={12}><path d="M1 1h12v10H1zM1 2h12" stroke="#3d2e10" strokeWidth="2" /></S></IconButton>
          <Close aria-label="Zavrieť"><S w={10} h={10}><path d="M1 1l8 8M9 1l-8 8" stroke="#fff" strokeWidth="2" /></S></Close>
        </Controls>
      </WordTitle>
      <Tabs>
        {wordTabs.map(([n, w], i) => <Tab key={n} $w={w} $on={i === 0}>{n}</Tab>)}
        <Help aria-label="Pomocník"><S w={19} h={19}><circle cx="9.500" cy="9.500" r="9" fill="#e8f1fd" stroke="#5c7cb8" /><circle cx="9.500" cy="9.500" r="7" fill="#2f66bd" /><text x="6" y="14" fontSize="13" fontWeight="700" fill="#fff" fontFamily="Liberation Sans, sans-serif">?</text></S></Help>
      </Tabs>
      <WordRibbon />
      <RulerBar>
        <TabStop aria-label="Zarážka"><S w={10} h={10}><path d="M2 0v8h8" stroke="#222" strokeWidth="3" /></S></TabStop>
        <Ruler>
          {Array.from({ length: 21 }, (_, i) => i - 2).map((n) => (
            <Mark key={n}><span>{n === 0 || n === 16 ? "" : Math.abs(n)}</span></Mark>
          ))}
          <Marker $left={120} $top={-4} width="14" height="28" viewBox="0 0 14 28" fill="#f0f4fb" stroke="#66758f"><path d="M1 1h12v3l-6 7l-6-7zM7 11l6 7v3H1v-3zM1 21h12v6H1z" /></Marker>
          <Marker $left={936} $top={7} width="14" height="12" viewBox="0 0 14 12" fill="#f0f4fb" stroke="#66758f"><path d="M7 1l6 6v4H1V7z" /></Marker>
        </Ruler>
        <RulerEnd>
          <S w={18} h={3}><path d="M3 1h12" stroke="#2d4a80" strokeWidth="3" /></S>
          <S w={18} h={22}><rect x="0" y="0" width="18" height="22" rx="2" fill="#dfe9f8" stroke="#8aa2cc" /><path d="M4 4h5v4h5v9h-4v2H6v-4H3V9h1z" fill="#fff" stroke="#555" /></S>
        </RulerEnd>
      </RulerBar>
      <Viewport>
        <Gutter />
        <Paper>
          <Lead>Ako je možnosť vidieť čierne polička budú predstavovať 1 a prázdne biele 0.</Lead>
          <Step>
            <span>1.</span>
            <StepText>
              <Prose>Krok – Zvoliť si vstupy takže zadať vstupné hodnoty do príkazového riadku v</Prose>
              <Prose>programovom prostredí <Wave>Matlab</Wave>. Takže vstupov bude 35 to je 7x5=35x26=910</Prose>
              {bits.map((row, i) => (
                <Bits key={i}>
                  {row.map((b, j) => (
                    <React.Fragment key={j}>{b.wave ? <Wave $red={b.red}>{b.t}</Wave> : b.t}{" "}</React.Fragment>
                  ))}
                </Bits>
              ))}
            </StepText>
          </Step>
        </Paper>
        <PaperEdge />
        <ScrollColumn>
          <Track>
            <Caret up c="#3f5c94" />
            <Thumb />
            <Caret c="#2f4c84" />
          </Track>
          <Browse>
            <S w={9} h={10}><path d="M0 5l4.500-5L9 5zM0 10l4.500-5L9 10z" fill="#111" /></S>
            <S w={10} h={10}><circle cx="5" cy="5" r="4" fill="#dfe8f5" stroke="#222" strokeWidth="2" /></S>
            <S w={9} h={10}><path d="M0 0h9L4.500 5zM0 5h9l-4.500 5z" fill="#111" /></S>
          </Browse>
        </ScrollColumn>
        <PageTip>Strana 2</PageTip>
        <Cursor width="16" height="26" viewBox="0 0 16 26"><path d="M1 1v20l4-4l4 8l3-2l-4-7h6z" fill="#fff" stroke="#222" /></Cursor>
      </Viewport>
      <ScrollRow>
        <ScrollEnd $w={43} aria-label="Doľava"><S w={6} h={10}><path d="M6 0v10L0 5z" fill="#3a5690" /></S></ScrollEnd>
        <HThumb />
        <ScrollEnd $w={42} $right aria-label="Doprava"><S w={6} h={10}><path d="M0 0v10l6-5z" fill="#2f4c84" /></S></ScrollEnd>
      </ScrollRow>
      <Status>
        <StatusCell $w={107}>Strana: 2 z 5</StatusCell>
        <StatusCell $w={105}>Slová: 1 695</StatusCell>
        <StatusCell $w={45}><S w={24} h={22}><path d="M1 11l9-5l10 6l-9 8z" fill="#fff" stroke="#5b79b4" strokeWidth="2" /><path d="M12 1l9 10M21 1l-8 10" stroke="#d23c38" strokeWidth="3" /></S></StatusCell>
        <StatusTools>
          <Views>
            <ViewButton $on aria-label="Rozloženie"><S w={16} h={16}><path d="M1 1h14v14H1z" fill="#fffbe8" stroke="#444" /><path d="M4 5h8M4 8h8M4 11h8" stroke="#777" /></S></ViewButton>
            <ViewButton aria-label="Čítanie"><S w={16} h={16}><path d="M1 2q4 0 7 2q3-2 7-2v11q-4 0-7 2q-3-2-7-2zM8 4v11" fill="#fff" stroke="#444" /></S></ViewButton>
            <ViewButton aria-label="Web"><S w={16} h={16}><path d="M1 1h12v12H1z" fill="#fff" stroke="#556" /><path d="M4 5h6M4 8h6" stroke="#777" /><circle cx="12" cy="12" r="4" fill="#2f7f86" /></S></ViewButton>
            <ViewButton aria-label="Osnova"><S w={14} h={16} stroke="#777" strokeWidth="2" strokeDasharray="3 1"><path d="M0 2h12M3 6h11M5 10h9M3 14h9" /></S></ViewButton>
            <ViewButton aria-label="Koncept"><S w={14} h={14} stroke="#5d6678" strokeWidth="2"><path d="M0 1h14M0 5h14M0 9h14M0 13h14" /></S></ViewButton>
          </Views>
          <Row $gap={12}><span>100 %</span>
            <Row>
              <RoundButton aria-label="Oddialiť"><S w={10} h={2}><path d="M0 1h10" stroke="#222" strokeWidth="2" /></S></RoundButton>
              <Zoom type="range" aria-label="Lupa" min="0" max="100" defaultValue="50" />
              <RoundButton aria-label="Priblížiť"><S w={10} h={10}><path d="M0 5h10M5 0v10" stroke="#222" strokeWidth="2" /></S></RoundButton>
            </Row>
            <S w={16} h={16} fill="#2a4580"><path d="M12 1h3v3h-3zM12 6h3v3h-3zM7 6h3v3H7zM12 11h3v3h-3zM7 11h3v3H7zM2 11h3v3H2z" /></S>
          </Row>
        </StatusTools>
      </Status>
    </Word>
  );
}

export default function App() {
  return (
    <Page>
      <GlobalStyle />
      <Stage>
        <Screen>
          <Desktop>
            <Shortcuts>
              <Shortcut>
                <S w={26} h={28} box="0 0 26 26"><path d="M5 2l13-1l3 14l-13 2z" fill="#1d3fb4" stroke="#c5d3ea" strokeWidth="2" /><path d="M2 5l3-1l3 15l-4 2z" fill="#a8c2e8" /><path d="M9 20l12-3l3 4l-9 4z" fill="#d5dae8" /></S>
                <span>Tento<br />počítač</span>
              </Shortcut>
              <Shortcut>
                <S w={26} h={28} box="0 0 26 26"><path d="M1 4h24v20H1z" fill="#fff" /><path d="M3 6h20v16H3z" fill="#9fd3e6" /><path d="M3 12q9 4 20 3v7H3z" fill="#3c95a6" /><path d="M3 11q6 1 11 5H3z" fill="#1d6a72" /></S>
                <span>Birmovanci<br />(14)</span>
              </Shortcut>
            </Shortcuts>
            <HiddenCaption width="28" height="8" fill="none" stroke="#3a2a08" strokeWidth="2"><path d="M1 0q1 4 5 5M8 0v3M12 0v3M16 0v4M20 0q1 4-3 5M26 0q-1 4-4 5" /></HiddenCaption>
            <BackWindow><BackPane $w="270px" /><BackPane $w="calc(100% - 270px)" /></BackWindow>
            <ExplorerWindow />
            <WordWindow />
          </Desktop>
          <Taskbar>
            <Start aria-label="Štart"><S w={20} h={20}><path d="M0 3l9-1v8H0zM10 2l10-2v10H10zM0 11h9v8l-9-1zM10 11h10v9l-10-1z" fill="#fff" /></S></Start>
            {taskIcons.map(([name, icon, state]) => (
              <Task key={name} aria-label={name} $open={state === "open"} $front={state === "front"}>{icon}</Task>
            ))}
            <Tray>
              <IconButton aria-label="Skryté ikony"><S w={12} h={8}><path d="M0 8l6-8l6 8z" fill="#fff" stroke="#8a6a35" /></S></IconButton>
              <IconButton aria-label="Centrum akcií"><S w={22} h={24}><path d="M2 1v22" stroke="#fff" strokeWidth="2" /><path d="M3 2h7l2 2h6v9H9l-1-2H3z" fill="#fff" stroke="#666" /><circle cx="15" cy="17" r="6" fill="#d02a2a" /><path d="M12 14l6 6M18 14l-6 6" stroke="#fff" strokeWidth="2" /></S></IconButton>
              <IconButton aria-label="Napájanie"><S w={22} h={24}><path d="M3 1v5M8 1v5M1 6h9v5q0 3-4 3v8" stroke="#fff" strokeWidth="2" /><path d="M12 3h8v19h-8z" fill="#5a4a38" stroke="#ddd" /><path d="M12 13h9v10h-9z" fill="#d02a2a" /></S></IconButton>
              <IconButton aria-label="Hlasitosť"><S w={22} h={22}><path d="M1 7h4l6-6v20l-6-6H1z" fill="#fff" stroke="#666" /><path d="M14 7q3 4 0 8M17 4q5 7 0 14" stroke="#fff" strokeWidth="2" /></S></IconButton>
              <IconButton aria-label="Sieť"><S w={22} h={22}><path d="M8 4h13v11H8M13 15v5M9 20h9" stroke="#fff" strokeWidth="2" /><path d="M1 2h6v7H1zM4 9v12" stroke="#fff" strokeWidth="2" /></S></IconButton>
            </Tray>
          </Taskbar>
        </Screen>
        <Rail>
          <RailTools>
            <IconButton $w={40} $h={31} aria-label="Snímka"><S w={40} h={31} stroke="#dcdcdc" strokeWidth="2"><rect x="1" y="6" width="38" height="24" rx="3" /><path d="M10 6l3-4h14l3 4" /><circle cx="20" cy="17" r="6" strokeWidth="3" /></S></IconButton>
            <IconButton $w={40} $h={36} aria-label="Kresliť"><S w={36} h={36} stroke="#dcdcdc" strokeWidth="2"><path d="M15 19L29 2l6 6L21 23" /><path d="M2 34q-1-9 5-13q7-4 12 2q3 5-3 9q-6 4-14 2zM15 19l6 5" /></S></IconButton>
          </RailTools>
          <Stepper>
            <button aria-label="Zväčšiť"><S w={12} h={12}><path d="M0 6h12M6 0v12" stroke="#555" strokeWidth="3" /></S></button>
            <Level>100</Level>
            <button aria-label="Zmenšiť"><S w={12} h={4}><path d="M0 2h12" stroke="#ccc" strokeWidth="3" /></S></button>
          </Stepper>
          <Disc $after={10} aria-label="Pozastaviť"><S w={16} h={20}><path d="M3 0v20M13 0v20" stroke="#000" strokeWidth="5" /></S></Disc>
          <Disc $after={36} aria-label="Zastaviť"><S w={14} h={15}><rect width="14" height="15" rx="1" fill="#000" /></S></Disc>
          <Timer>00:00:26</Timer>
        </Rail>
      </Stage>
      <Promo>
        <Logo><span>G</span><span>o</span><span>o</span><span>g</span><span>l</span><span>e</span></Logo>
        <label htmlFor="promo">Search</label>
        <PromoInput id="promo" defaultValue="liteCam" />
        <span>to record videos!</span>
      </Promo>
    </Page>
  );
}
